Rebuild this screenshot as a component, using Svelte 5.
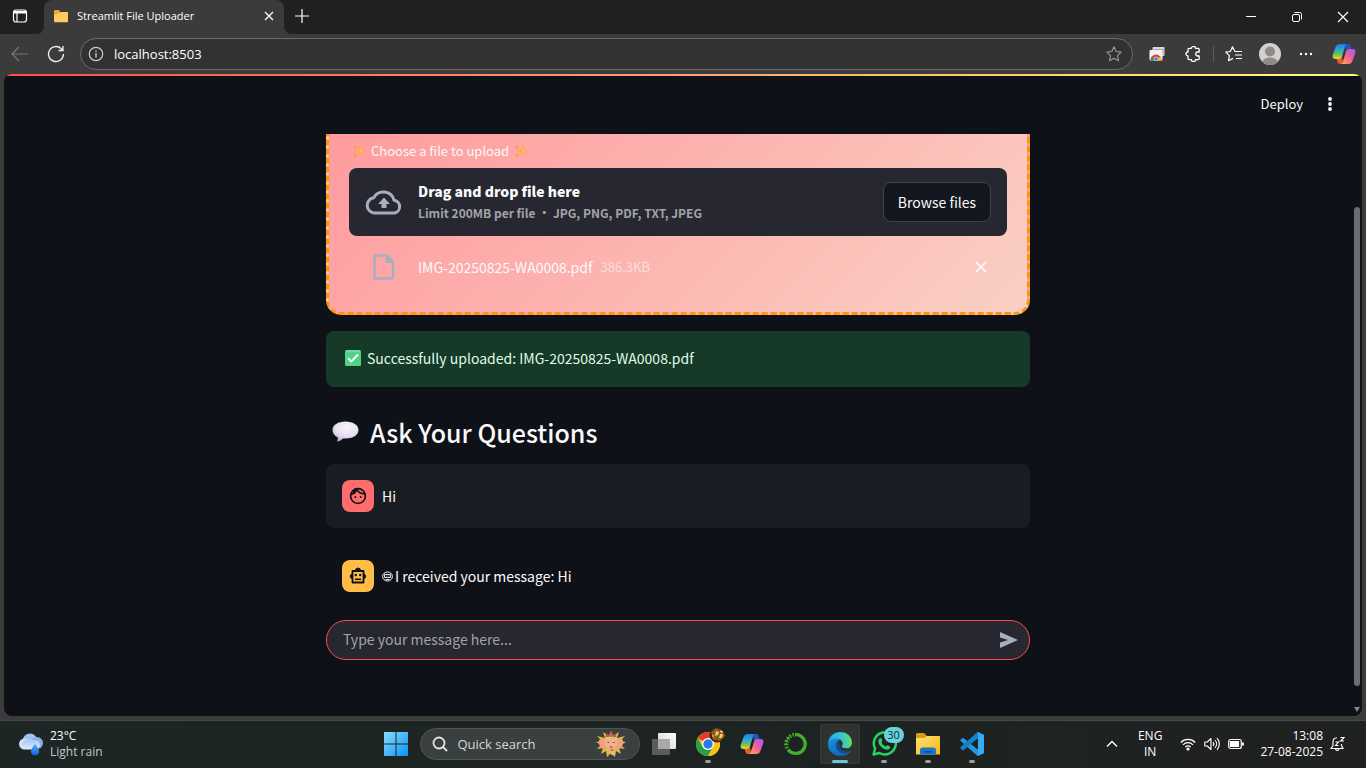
<script>
  let message = $state('');
  const fileName = 'IMG-20250825-WA0008.pdf';
</script>

{#snippet copilot(id, size)}
  <svg width={size} height={size} viewBox="0 0 24 24" aria-hidden="true">
    <defs>
      <linearGradient id="{id}a" x1="0" y1="0" x2="0" y2="1">
        <stop offset="0" stop-color="#1b7fe8" /><stop offset=".35" stop-color="#2aa5d8" />
        <stop offset=".65" stop-color="#63bd62" /><stop offset="1" stop-color="#f4d51c" />
      </linearGradient>
      <linearGradient id="{id}b" x1="1" y1="0" x2="0" y2="1">
        <stop offset="0" stop-color="#9a5cf4" /><stop offset=".5" stop-color="#f25f9c" />
        <stop offset="1" stop-color="#ffb04a" />
      </linearGradient>
    </defs>
    <path d="M13 2h3.200c1.300 0 2 .8 2.400 2L19.500 7h-3.200c-1.400 0-2 .6-2.400 1.800z" fill="#1757c8" />
    <path d="M11 22H8c-1.300 0-2.100-.7-2.500-2L4.500 17h3.200c1.500 0 2.100-.7 2.500-1.900z" fill="#ee5a2e" />
    <path d="M7.500 2H15c-1.200.3-1.600 1.200-2 2.500L9.800 15c-.4 1.300-1.200 2-2.500 2H3.400C1 17 0 15.200.7 13L3.600 5C4.300 3 5.500 2 7.500 2z" fill="url(#{id}a)" />
    <path d="M16.500 22H9c1.200-.3 1.600-1.200 2-2.500L14.200 9c.4-1.300 1.200-2 2.500-2h3.900c2.400 0 3.400 1.800 2.700 4l-2.900 8c-.7 2-1.900 3-3.900 3z" fill="url(#{id}b)" />
  </svg>
{/snippet}

{#snippet sparkles()}
  <svg width="14" height="14" viewBox="0 0 14 14" aria-hidden="true">
    <path d="M8.500.8l1.600 4L14 6.500l-3.900 1.700-1.600 4.200-1.600-4.200L3 6.500l3.900-1.700z" fill="#ffae3d" />
    <path d="M8.500 4l.9 2 1.800.7-1.800.7-.9 2.200z" fill="#ffd06a" />
    <path d="M3 .5l.7 1.800 1.800.7-1.800.7L3 5.500l-.7-1.800L.5 3l1.800-.7zM3 8.500l.8 1.900 1.700.8-1.700.8L3 13.800l-.8-1.800-1.700-.8 1.700-.8z" fill="#fb9d45" />
  </svg>
{/snippet}

<div class="desktop">
  <div class="tabstrip">
    <button class="plain workspace" aria-label="Tab actions">
      <svg width="16" height="16" viewBox="0 0 16 16" fill="none" stroke="#fff" stroke-width="1.200"><rect x="1.500" y="2" width="13" height="12" rx="2.500" /><path d="M2 5h12M5 5v9" /><path d="M2 4h12" stroke-width="2" /></svg>
    </button>
    <div class="tab">
      <svg width="14" height="14" viewBox="0 0 14 14" aria-hidden="true"><path d="M0 2.500C0 1.700.5 1 1.400 1h3.200L6.500 3h5c.8 0 1.500.6 1.500 1.400V12H1.500C.6 12 0 11.400 0 10.500z" fill="#f5a92c" /><path d="M1 5.500L8 3h5c.6 0 1 .4 1 1v8c0 .8-.5 1.300-1.300 1.300H1.300C.6 13.300 0 12.800 0 12V6.500z" fill="#ffca60" /></svg>
      <span>Streamlit File Uploader</span>
      <button class="plain" aria-label="Close tab"><svg width="10" height="10" viewBox="0 0 10 10" stroke="#fff" stroke-width="1.300"><path d="M1 1l8 8M9 1L1 9" /></svg></button>
    </div>
    <button class="plain newtab" aria-label="New tab"><svg width="14" height="14" viewBox="0 0 14 14" stroke="#fff" stroke-width="1.200"><path d="M7 0v14M0 7h14" /></svg></button>
    <div class="winctl">
      <button class="plain" aria-label="Minimize"><svg width="12" height="12" viewBox="0 0 12 12" stroke="#fff"><path d="M1 5.500h10" /></svg></button>
      <button class="plain" aria-label="Restore"><svg width="12" height="12" viewBox="0 0 12 12" fill="none" stroke="#fff"><rect x="1.500" y="3.500" width="7" height="7" rx="1.500" /><path d="M3.500 1.500h5a2 2 0 0 1 2 2v5" /></svg></button>
      <button class="plain" aria-label="Close"><svg width="12" height="12" viewBox="0 0 12 12" stroke="#fff" stroke-width="1.200"><path d="M1 1l10 10M11 1L1 11" /></svg></button>
    </div>
  </div>

  <div class="toolbar">
    <button class="plain" aria-label="Back"><svg width="18" height="16" viewBox="0 0 18 16" fill="none" stroke="#777" stroke-width="1.200"><path d="M17 8H1M8 1L1 8l7 7" /></svg></button>
    <button class="plain" aria-label="Refresh"><svg width="18" height="18" viewBox="0 0 18 18" fill="none" stroke="#f2f2f2" stroke-width="1.300"><path d="M16.500 9A7.500 7.500 0 1 1 14.300 3.700L16 5.500M16 1v4.500h-4.500" /></svg></button>
    <div class="address">
      <svg width="16" height="16" viewBox="0 0 16 16" fill="none" stroke="#ccc" stroke-width="1.200" aria-hidden="true"><circle cx="8" cy="8" r="6.700" /><path d="M8 7v4.500M8 4.500V6" stroke-width="1.400" /></svg>
      <input type="text" aria-label="Address" value="localhost:8503" />
      <button class="plain" aria-label="Add to favorites"><svg width="16" height="16" viewBox="0 0 16 16" fill="none" stroke="#999" stroke-width="1.100" stroke-linejoin="round"><path d="M8 .8l2.200 4.700 5 .6-3.700 3.500 1 5.100L8 12.200l-4.500 2.500 1-5.100L.8 6.100l5-.6z" /></svg></button>
    </div>
    <div class="tools">
      <button class="plain" aria-label="Extension"><svg width="16" height="14" viewBox="0 0 16 14"><rect x="3.500" y="0" width="12" height="9" rx="1" fill="#d8d8d8" /><rect x="4.500" y="2" width="10" height="6" fill="#a7a7a7" /><rect x=".5" y="3" width="13" height="10.500" rx="1" fill="#f3f3f3" /><path d="M1.500 13.500a5.500 6 0 0 1 11 0z" fill="#e9392f" /><path d="M1.500 13.500a5.500 6 0 0 1 1.500-4L6.500 13.500z" fill="#28a04d" /><path d="M12.500 13.500a5.500 6 0 0 0-1.500-4L7.500 13.500z" fill="#fbc116" /><circle cx="7" cy="12" r="2" fill="#2f76e8" stroke="#fff" stroke-width=".6" /></svg></button>
      <button class="plain" aria-label="Extensions"><svg width="16" height="16" viewBox="0 0 16 16" fill="none" stroke="#fff" stroke-width="1.300" stroke-linejoin="round"><path d="M3 5V3.500C3 2.700 3.500 2.300 4.200 2.300H6.500a2 2 0 0 1 4 0H13c.8 0 1.200.5 1.200 1.200V6h-1.400a2 2 0 0 0 0 4h1.400v2.500c0 .8-.5 1.200-1.200 1.200h-2.500a2 2 0 0 1-4 0H4.200c-.7 0-1.200-.4-1.200-1.200V10a2 2 0 0 1 0-4z" /></svg></button>
      <span class="divider"></span>
      <button class="plain" aria-label="Favorites"><svg width="18" height="16" viewBox="0 0 18 16" fill="none" stroke="#fff" stroke-width="1.200" stroke-linejoin="round"><path d="M10.500 5.500L9.800 5.300 7.500.8 5.300 5.500.8 6.100l3.600 3.500-.9 5.100 4.500-2.300M10.500 5.500H17M10 9h7M11 12.500h6" /></svg></button>
      <button class="plain" aria-label="Profile"><svg width="22" height="22" viewBox="0 0 22 22"><defs><clipPath id="avatarclip"><circle cx="11" cy="11" r="11" /></clipPath></defs><g clip-path="url(#avatarclip)"><path d="M0 0h22v22H0z" fill="#d3d0cd" /><circle cx="11" cy="8.500" r="5" fill="#8e8a86" /><ellipse cx="11" cy="20" rx="8" ry="5.500" fill="#8e8a86" /></g></svg></button>
      <button class="plain" aria-label="Settings and more"><svg width="14" height="4" viewBox="0 0 14 4" fill="#fff"><circle cx="2" cy="2" r="1.200" /><circle cx="7" cy="2" r="1.200" /><circle cx="12" cy="2" r="1.200" /></svg></button>
      <button class="plain" aria-label="Copilot">{@render copilot('cp1', 24)}</button>
    </div>
  </div>

  <div class="page">
    <div class="decoration"></div>
    <div class="content">
      <header>
        <button class="plain deploy">Deploy</button>
        <button class="plain" aria-label="Main menu"><svg width="6" height="16" viewBox="0 0 6 16" fill="#fafafa"><circle cx="3" cy="3" r="1.900" /><circle cx="3" cy="8" r="1.900" /><circle cx="3" cy="13" r="1.900" /></svg></button>
      </header>
      <main>
        <div class="column">
          <section class="upload">
            <div class="label">{@render sparkles()}<span>Choose a file to upload</span>{@render sparkles()}</div>
            <div class="dropzone">
              <svg class="cloud" width="38" height="26" viewBox="0 0 38 26" fill="none" stroke="#a9adc1" stroke-width="3" aria-hidden="true"><path d="M9.500 24a7.700 7.700 0 0 1-.8-15.300A11 11 0 0 1 29 11.200a6.500 6.500 0 0 1 .5 12.800z" stroke-linejoin="round" /><path d="M19 8.500l6 6.500h-3.500v4h-5v-4H13z" fill="#a9adc1" stroke="none" /></svg>
              <div class="hint"><strong>Drag and drop file here</strong><small>Limit 200MB per file • JPG, PNG, PDF, TXT, JPEG</small></div>
              <button class="browse">Browse files</button>
            </div>
            <div class="file">
              <svg class="doc" width="22" height="26" viewBox="0 0 22 26" aria-hidden="true"><path d="M3 1.500h11l6 6V23a1.500 1.500 0 0 1-1.500 1.500H3A1.500 1.500 0 0 1 1.500 23V3A1.500 1.500 0 0 1 3 1.500z" fill="none" stroke="#a9adc1" stroke-width="2.400" /><path d="M12.500 1.500V9h7.500z" fill="#a9adc1" /></svg>
              <span class="name">{fileName}</span><span class="size">386.3KB</span>
              <button class="plain" aria-label="Remove file"><svg width="12" height="12" viewBox="0 0 12 12" stroke="#fff" stroke-width="1.600"><path d="M1 1l10 10M11 1L1 11" /></svg></button>
            </div>
          </section>

          <div class="success" role="status">
            <svg width="16" height="16" viewBox="0 0 16 16" aria-hidden="true"><rect width="16" height="16" rx="1.500" fill="#4fd487" /><path d="M1 1h14" stroke="#86e6ae" /><path d="M3 8.300l3.400 3.200L13 4.500" fill="none" stroke="#fff" stroke-width="1.900" /></svg>
            <span>Successfully uploaded: {fileName}</span>
          </div>

          <h2>
            <svg width="27" height="21" viewBox="0 0 27 21" aria-hidden="true"><defs><radialGradient id="bubble" cx=".55" cy=".3" r=".75"><stop offset="0" stop-color="#f8f3fb" /><stop offset=".6" stop-color="#e6def2" /><stop offset="1" stop-color="#baa5da" /></radialGradient></defs><path d="M13.500.5C21 .5 26.500 4 26.500 9S21 17.500 13.500 17.500q-1.500 0-2.500-.1C9.500 19 7 20.500 5 20.300c.7-1 1-2.500.6-4C2.500 14.800.5 12 .5 9c0-5 5.500-8.500 13-8.500z" fill="url(#bubble)" /></svg>
            <span>Ask Your Questions</span>
          </h2>

          <div class="chat user">
            <span class="avatar"><svg width="18" height="18" viewBox="0 0 18 18" aria-hidden="true"><circle cx="9" cy="9" r="7.400" fill="none" stroke="#0e1117" stroke-width="1.700" /><path d="M2 7.500C5 7 7 5.200 7.800 2.300 9.500 5.500 12 7 16 6.800M4 5.500L6.500 2" fill="none" stroke="#0e1117" stroke-width="1.500" /><circle cx="6.300" cy="10" r="1" fill="#0e1117" /><circle cx="11.700" cy="10" r="1" fill="#0e1117" /></svg></span>
            <p>Hi</p>
          </div>
          <div class="chat bot">
            <span class="avatar"><svg width="20" height="18" viewBox="0 0 20 18" aria-hidden="true"><path d="M4.500 4h11v11.500h-11z" fill="none" stroke="#0e1117" stroke-width="1.800" stroke-linejoin="round" /><path d="M7.500 3.500a2.500 2.500 0 1 1 5 0zM4 7.200v4.300a2.200 2.200 0 0 1 0-4.300M16 7.200a2.200 2.200 0 0 1 0 4.300z" fill="#0e1117" stroke="#0e1117" /><circle cx="7.800" cy="8" r="1.200" fill="#0e1117" /><circle cx="12.200" cy="8" r="1.200" fill="#0e1117" /><path d="M7 12.300h6" stroke="#0e1117" stroke-width="1.600" /></svg></span>
            <p><svg width="11" height="11" viewBox="0 0 11 11" fill="none" stroke="#fafafa" aria-hidden="true"><ellipse cx="5.500" cy="5.500" rx="4.900" ry="4.500" /><path d="M2.500 3.500h6v3h-6zM3.500 8.500h4M4.500 5h.8M6.500 5h.8" stroke-width=".9" /></svg><span>I received your message: Hi</span></p>
          </div>

          <form class="ask" onsubmit={(e) => e.preventDefault()}>
            <input type="text" aria-label="Type your message here" placeholder="Type your message here..." bind:value={message} />
            <button class="plain" aria-label="Send message"><svg width="18" height="16" viewBox="0 0 18 16"><path d="M0 0l18 8-18 8v-5.500L8 8 0 5.500z" fill="#a9adc1" /></svg></button>
          </form>
        </div>
      </main>
    </div>
    <div class="scrollbar"><span class="thumb"></span><span class="arrow"></span></div>
  </div>

  <footer class="taskbar">
    <button class="plain weather">
      <svg width="26" height="24" viewBox="0 0 26 24" aria-hidden="true"><defs><linearGradient id="cloudy" x1="0" y1="0" x2="0" y2="1"><stop offset="0" stop-color="#a8c7f7" /><stop offset="1" stop-color="#e3ecfb" /></linearGradient><linearGradient id="drop" x1="0" y1="0" x2="0" y2="1"><stop offset="0" stop-color="#5aa9ff" /><stop offset="1" stop-color="#0a66e8" /></linearGradient></defs><circle cx="12" cy="9" r="7.500" fill="#9fc0f3" /><circle cx="6.500" cy="12" r="5.500" fill="#cfdffb" /><circle cx="19" cy="11" r="6" fill="#8aaeea" /><rect x="4" y="8" width="18" height="9.500" rx="4.700" fill="url(#cloudy)" /><path d="M17 12c2 2.500 4 5 4 7.300a4 4 0 0 1-8 0c0-2.300 2-4.800 4-7.300z" fill="url(#drop)" /></svg>
      <span><b>23°C</b><i>Light rain</i></span>
    </button>
    <div class="apps">
      <button class="plain app" aria-label="Start"><svg width="24" height="24" viewBox="0 0 24 24"><defs><linearGradient id="win" x1="0" y1="0" x2="1" y2="1"><stop offset="0" stop-color="#86dcff" /><stop offset="1" stop-color="#0a93f5" /></linearGradient></defs><path d="M0 0h11.500v11.500H0zM12.500 0H24v11.500H12.500zM0 12.500h11.500V24H0zM12.500 12.500H24V24H12.500z" fill="url(#win)" /></svg></button>
      <button class="search">
        <svg width="16" height="16" viewBox="0 0 16 16" fill="none" stroke="#e3e6e5" stroke-width="1.800" aria-hidden="true"><circle cx="7" cy="7" r="5.500" /><path d="M11 11l4 4" /></svg>
        <span>Quick search</span>
        <svg width="32" height="28" viewBox="0 0 32 28" aria-hidden="true"><path d="M16 1l2 5 6-4-2 6 8-2-5 5 6 1-5 3 4 4-6-1 2 6-5-3-1 6-4-4-4 4-1-6-5 3 2-6-6 1 4-4-5-3 6-1-5-5 8 2-2-6 6 4z" fill="#e2bb3e" /><path d="M11 9C6 7.500 3 9 4 13.500c.5 3.500 3.500 7 7 5.500zM21 9c5-1.500 8 0 7 4.500-.5 3.500-3.500 7-7 5.500z" fill="#ee9f7e" /><path d="M9.500 12C9 7 12 5 16 5s7 2 6.500 7c-.3 4-2 5.500-3.500 7 0 3 .5 4 1.500 5-2 2-5 1.500-5.500-2L14 19c-3-1.500-4.200-3-4.500-7z" fill="#f2b08c" /><path d="M10.500 7.500l.5-4 2.500 1.500L16 1l2.500 4L21 3.500l.5 4c-3-1-8-1-11 0z" fill="#c95a3c" /><path d="M10.500 7.500c3-1 8-1 11 0v1.300c-3-1-8-1-11 0z" fill="#f0c743" /><path d="M15 5h2v2h-2z" fill="#37a9c8" /><path d="M12.500 12.500H14M18 12.500h1.500M14.500 17h3M15.500 20h3" stroke="#7a3f34" /></svg>
      </button>
      <button class="plain app" aria-label="Task view"><svg width="24" height="24" viewBox="0 0 24 24"><defs><linearGradient id="tv" x1="1" y1="0" x2="0" y2="1"><stop offset="0" stop-color="#fff" /><stop offset="1" stop-color="#cfcfcf" /></linearGradient></defs><rect x="6" y="1" width="18" height="16" rx="1" fill="url(#tv)" /><rect x="0" y="7" width="18" height="16" rx="1" fill="#5b5d5d" /><path d="M6 7h12v10H6z" fill="#a9a9a9" /></svg></button>
      <button class="plain app" aria-label="Google Chrome"><svg class="chrome" width="30" height="30" viewBox="0 0 30 30"><circle cx="12" cy="17" r="12" fill="#fbc116" /><path d="M12 17L1.600 11A12 12 0 0 1 22.400 11H12z" fill="#e33b2e" /><path d="M1.600 11A12 12 0 0 0 12 29l5.200-9L6.800 20z" fill="#26a148" /><path d="M12 11h10.400a12 12 0 0 1-10.400 18l5.200-9z" fill="#fbc116" /><circle cx="12" cy="17" r="6" fill="#fff" /><circle cx="12" cy="17" r="4.700" fill="#2f76e8" /><circle cx="21" cy="8" r="7.500" fill="#3a2611" /><path d="M15 5l5-4 7 3 2 5-5 5-7-1z" fill="#8c5a1c" /><path d="M20 4l3 1-1 3-3 1zM24 7l3 0-1 4-3 0zM16 7l2 2-1 2z" fill="#f2cb5f" /><path d="M24 3l3 2-2 1z" fill="#fff1bd" /></svg><em></em></button>
      <button class="plain app" aria-label="Microsoft Copilot">{@render copilot('cp2', 24)}</button>
      <button class="plain app" aria-label="Anaconda"><svg width="24" height="24" viewBox="0 0 26 26" fill="none" stroke="#43b02a"><path d="M12 2.800A10.200 10.200 0 1 1 4.500 19" stroke-width="3.600" /><path d="M3.500 17.500A10.200 10.200 0 0 1 12 2.800" stroke-width="4.500" stroke-dasharray="1.600 1.800" /><path d="M2.500 14A10.300 10.300 0 0 1 8 3.800" stroke-width="1.500" stroke-dasharray="2.500 1" /></svg></button>
      <button class="plain app active" aria-label="Microsoft Edge"><svg width="24" height="24" viewBox="0 0 24 24"><defs><linearGradient id="ed1" x1="0" y1=".3" x2="1" y2=".2"><stop offset="0" stop-color="#2aa6ea" /><stop offset=".55" stop-color="#32c6cf" /><stop offset="1" stop-color="#6be04f" /></linearGradient><linearGradient id="ed2" x1="0" y1="0" x2="1" y2="1"><stop offset="0" stop-color="#1794dc" /><stop offset="1" stop-color="#1057b0" /></linearGradient></defs><path d="M0 12C0 5 5.500 0 12.200 0 19 0 24 4.800 24 10.500c0 3.500-2.500 5.800-5.600 5.800-2.600 0-4.700-.8-4.700-2.200 0-.7 1-1 1-2.600C14.700 9 12 7 8.500 7 4 7 .5 9.500 0 12z" fill="url(#ed1)" /><path d="M0 12c.3-3.200 3.800-5.500 8.300-5.500 2 0 3.800.7 4.700 1.500C9.800 8 8 10.500 8 13.300c0 5 5 8.700 9.500 7.700 2-.4 3.700-1.500 4.700-2.300.5-.4 1 0 .6.600C20.500 22.500 17 24 13 24 5.500 24-.4 18.500 0 12z" fill="url(#ed2)" /><path d="M10.300 9C8.500 10.300 7.500 12 8 14.500c.7 4.500 5 7.300 9.500 6.500 2-.4 3.500-1.400 4.500-2.200-3.500 1.500-8 .2-9.500-3.200-1-2.300-.8-4.600-2.200-6.600z" fill="#114a8b" /></svg><em></em></button>
      <button class="plain app" aria-label="WhatsApp"><svg width="26" height="26" viewBox="0 0 26 26"><path d="M2.500 23.500l1.600-6A11 11 0 1 1 8.500 22z" fill="none" stroke="#25d366" stroke-width="2.400" stroke-linejoin="round" /><path d="M8.500 7.500c1-.8 1.700-.4 2 .3l.8 2c.2.600-.8 1.500-.8 1.800 1 2 2.400 3.200 4.300 4 .5.100 1.300-1.500 1.800-1.300l2.300 1.100c.8.400.2 2-.8 2.700-2.500 1.700-6.300-.4-8.500-2.800-2-2.300-3.200-5.800-1.100-7.800z" fill="#25d366" /></svg><span class="badge">30</span><em></em></button>
      <button class="plain app" aria-label="File Explorer"><svg width="24" height="24" viewBox="0 0 24 24"><defs><linearGradient id="fold" x1="0" y1="0" x2="1" y2="1"><stop offset="0" stop-color="#ffe07c" /><stop offset="1" stop-color="#fbb70e" /></linearGradient></defs><path d="M0 2.500C0 1.600.6 1 1.500 1H8l3 3h11c1.200 0 2 .8 2 1.500V12H0z" fill="#dc9b0c" /><path d="M0 6h8l3-2h12c.6 0 1 .4 1 1v17.500H0z" fill="url(#fold)" /><path d="M4 22.500V18c0-1.500 1-2.500 2.500-2.500h11c1.500 0 2.500 1 2.500 2.500v4.500z" fill="#1878cf" /><path d="M8 19h8v1.500H8z" fill="#0a4a8e" /></svg><em></em></button>
      <button class="plain app" aria-label="Visual Studio Code"><svg width="24" height="24" viewBox="0 0 24 24"><path d="M17.500 0L24 3v18l-6.500 3-16.800-15c-.5-.5-.5-1 0-1.500L2.200 6.200c.5-.4 1-.4 1.500 0l14.300 11z" fill="#2596dc" /><path d="M17.500 24L24 21V3l-6.500-3L.7 15c-.5.500-.5 1 0 1.500l1.500 1.400c.5.400 1 .4 1.500 0L18 6.500v11z" fill="#1380cc" /><path d="M11 12l7-5.500v11z" fill="#1d2322" /><path d="M17.500 0L24 3v18l-6.500 3c.4-.4.500-1 .5-1.500v-21c0-.6-.1-1.100-.5-1.500z" fill="#36aaf2" /></svg><em></em></button>
    </div>
    <div class="tray">
      <button class="plain" aria-label="Hidden icons"><svg width="12" height="8" viewBox="0 0 12 8" fill="none" stroke="#fff" stroke-width="1.400"><path d="M1 6.500l5-5 5 5" /></svg></button>
      <button class="plain lang"><span>ENG</span><span>IN</span></button>
      <button class="plain status" aria-label="Network, volume and battery">
        <svg width="16" height="14" viewBox="0 0 16 14" fill="none" stroke="#fff" stroke-width="1.200"><path d="M.8 5.500a10 10 0 0 1 14.400 0M3 7.800a7 7 0 0 1 10 0M5.300 10a4 4 0 0 1 5.400 0" /><circle cx="8" cy="12" r="1" fill="#fff" /></svg>
        <svg width="16" height="14" viewBox="0 0 16 14" fill="none" stroke="#fff" stroke-width="1.100" stroke-linejoin="round"><path d="M.8 5v4h2.500L7 12.500v-11L3.300 5zM9 5a3 3 0 0 1 0 4M11 3a6 6 0 0 1 0 8M13 1.200a8.500 8.500 0 0 1 0 11.600" /></svg>
        <svg width="16" height="12" viewBox="0 0 16 12" fill="none" stroke="#fff" stroke-width="1.200"><rect x=".7" y="1.500" width="12.600" height="9" rx="2" /><path d="M2.500 3.500h8v5h-8z" fill="#fff" /><path d="M15 4.500v3" stroke-width="1.800" /></svg>
      </button>
      <button class="plain clock"><span>13:08</span><span>27-08-2025</span></button>
      <button class="plain" aria-label="Notifications"><svg width="16" height="16" viewBox="0 0 16 16" fill="none" stroke="#fff" stroke-width="1.100"><path d="M7 1.800c-2.500.2-4 2-4 4.200v3.500L1 12.500h12l-1.500-3V8M5.500 13a1.800 1.800 0 0 0 3.500 0" /><path d="M5.500 6h3l-3 3.500h3M10.500 1.500h3.500L10.500 5H14" /></svg></button>
    </div>
  </footer>
</div>

<style>
  :global(body) { margin: 0; background: #3b3b3b; }
  .desktop { min-height: 100vh; display: flex; flex-direction: column; background: #3b3b3b; color: #fff; font-family: "Open Sans", "Noto Sans", sans-serif; font-size: 12px; line-height: 16px; }
  .desktop, .desktop * { box-sizing: border-box; }
  button, input { font: inherit; color: inherit; }
  svg { display: block; flex: none; }
  .plain { display: flex; align-items: center; justify-content: center; padding: 0; border: 0; background: none; flex: none; }

  .tabstrip { display: flex; height: 34px; background: #202020; }
  .workspace { width: 40px; margin-right: 4px; padding-bottom: 2px; }
  .tab { position: relative; display: flex; align-items: center; gap: 9px; width: 240px; padding: 0 10px 2px; background: #3b3b3b; border-radius: 8px 8px 0 0; font-size: 11px; }
  .tab::before, .tab::after { content: ""; position: absolute; bottom: 0; width: 8px; height: 8px; }
  .tab::before { left: -8px; background: radial-gradient(circle at 0 0, transparent 8px, #3b3b3b 8px); }
  .tab::after { right: -8px; background: radial-gradient(circle at 100% 0, transparent 8px, #3b3b3b 8px); }
  .tab span { flex: 1; white-space: nowrap; }
  .newtab { width: 36px; padding-bottom: 2px; }
  .winctl { display: flex; margin-left: auto; }
  .winctl .plain { width: 46px; }

  .toolbar { display: flex; align-items: center; height: 40px; padding: 0 8px 0 2px; }
  .toolbar > .plain { width: 36px; }
  .address { display: flex; align-items: center; flex: 1; gap: 10px; height: 32px; margin-left: 6px; padding: 0 10px 0 7px; border: 1px solid #6a6a6a; border-radius: 16px; background: #323232; }
  .address input { flex: 1; min-width: 0; border: 0; padding: 0; background: none; outline: 0; font-size: 13px; line-height: 20px; }
  .tools { display: flex; align-items: center; padding-left: 6px; }
  .tools .plain { width: 36px; height: 32px; }
  .tools .plain:last-child { width: 40px; margin-right: -6px; }
  .divider { width: 1px; height: 16px; margin: 0 2px; background: #5c5c5c; }

  .page { flex: 1; display: flex; position: relative; margin: 0 4px 4px; border-radius: 8px; overflow: hidden; background: #0e1117; color: #fafafa; font-family: "Noto Sans CJK SC", "Noto Sans", sans-serif; font-size: 14px; line-height: 24px; }
  .decoration { position: absolute; inset: 0 0 auto; height: 2px; background: linear-gradient(90deg, #ff4b4b, #fffd80); }
  .content { flex: 1; min-width: 0; display: flex; flex-direction: column; }
  .content header { display: flex; justify-content: flex-end; align-items: center; gap: 24px; height: 60px; padding-right: 19px; }
  .content header .plain { height: 24px; }
  .deploy { font-size: 13px; }
  main { flex: 1; overflow: hidden; }
  .column { max-width: 704px; margin: -18px auto 0; padding-bottom: 56px; }
  .upload { padding: 20px; border: 3px dashed #ff9800; border-radius: 15px; background: linear-gradient(135deg, #ff9a9e 0%, #fad0c4 100%); }
  .label { display: flex; align-items: center; gap: 5px; height: 24px; margin-bottom: 5px; padding-left: 3px; font-size: 13px; }
  .dropzone { display: flex; align-items: center; height: 68px; padding: 0 16px; border-radius: 8px; background: #262730; }
  .cloud { margin-right: 15px; }
  .hint { flex: 1; display: flex; flex-direction: column; padding-bottom: 2px; font-weight: 700; white-space: nowrap; }
  .hint strong { line-height: 24px; }
  .hint small { font-size: 12px; line-height: 20px; color: #a3a3a8; }
  .browse { min-width: 108px; height: 40px; padding: 0 12px; border: 1px solid #41434a; border-radius: 8px; background: #131720; }
  .file { display: flex; align-items: center; height: 56px; padding: 6px 20px 0 24px; }
  .doc { margin-right: 23px; }
  .name { margin-right: 8px; }
  .size { font-size: 13px; color: rgba(250, 250, 250, .6); }
  .file .plain { margin-left: auto; }
  .success { display: flex; align-items: center; gap: 6px; height: 56px; margin-top: 16px; padding: 0 16px 2px 19px; border-radius: 8px; background: #173928; color: #dffde9; }
  h2 { display: flex; align-items: center; gap: 11px; height: 61px; margin: 16px 0 0; padding: 0 0 4px 6px; font-size: 25px; line-height: 32px; font-weight: 500; }
  .chat { display: flex; align-items: center; gap: 8px; padding: 16px; border-radius: 8px; }
  .chat + .chat { margin-top: 16px; }
  .user { background: #1a1c24; }
  .avatar { display: flex; align-items: center; justify-content: center; width: 32px; height: 32px; border-radius: 8px; background: #ff6c6c; }
  .bot .avatar { background: #ffbd45; }
  .chat p { display: flex; align-items: center; gap: 2px; margin: 0; }
  .ask { display: flex; align-items: center; height: 40px; margin-top: 12px; padding: 0 11px 0 16px; border: 1px solid #ff4b4b; border-radius: 20px; background: #262730; }
  .ask input { flex: 1; min-width: 0; padding: 0 0 2px; border: 0; outline: 0; background: none; line-height: 24px; }
  .ask input::placeholder { color: #a3a3a8; opacity: 1; }
  .scrollbar { display: flex; flex-direction: column; align-items: center; width: 10px; padding-right: 1px; padding-bottom: 4px; }
  .scrollbar::before { content: ""; flex: 133; }
  .thumb { flex: 479; width: 6px; border-radius: 3px; background: #6b6c70; }
  .scrollbar::after { content: ""; order: 1; flex: 21; }
  .arrow { order: 2; border: 3px solid transparent; border-top: 5px solid #85868a; border-bottom: 0; }

  .taskbar { display: grid; grid-template-columns: 1fr auto 1fr; align-items: center; height: 48px; box-shadow: inset 0 1px #454a48; background: linear-gradient(90deg, #1d2624, #1d2322 60%, #202121); }
  .weather { justify-self: start; gap: 6px; padding-left: 18px; text-align: left; }
  .weather span, .lang, .clock { display: flex; flex-direction: column; }
  .weather b, .weather i { font-weight: 400; font-style: normal; }
  .weather i { color: #c4c8c7; }
  .apps { display: flex; align-items: center; gap: 4px; padding-left: 1px; }
  .app { position: relative; width: 40px; height: 40px; border-radius: 4px; }
  .active { background: #2e3332; box-shadow: inset 0 0 0 1px #353a39; }
  .app em { position: absolute; bottom: 1px; left: 17px; width: 6px; height: 3px; border-radius: 2px; background: #9b9e9d; }
  .active em { left: 12px; width: 16px; background: #66ccdb; }
  .chrome { margin: -5px 0 0 6px; }
  .badge { position: absolute; top: 3px; right: 0; width: 20px; height: 16px; border-radius: 8px; background: #68d3de; color: #10282b; text-align: center; font-size: 11px; line-height: 16px; }
  .search { display: flex; align-items: center; gap: 10px; width: 220px; height: 32px; padding: 0 12px 0 11px; border: 1px solid #505655; border-radius: 16px; background: #39403f; color: #d5d9d8; font-size: 13px; }
  .search span { flex: 1; text-align: left; }
  .tray { justify-self: end; display: flex; align-items: center; padding-right: 20px; }
  .lang { margin: 0 18px 0 20px; }
  .status { gap: 8px; margin-right: 16px; }
  .clock { align-items: flex-end; margin-right: 7px; }
</style>
